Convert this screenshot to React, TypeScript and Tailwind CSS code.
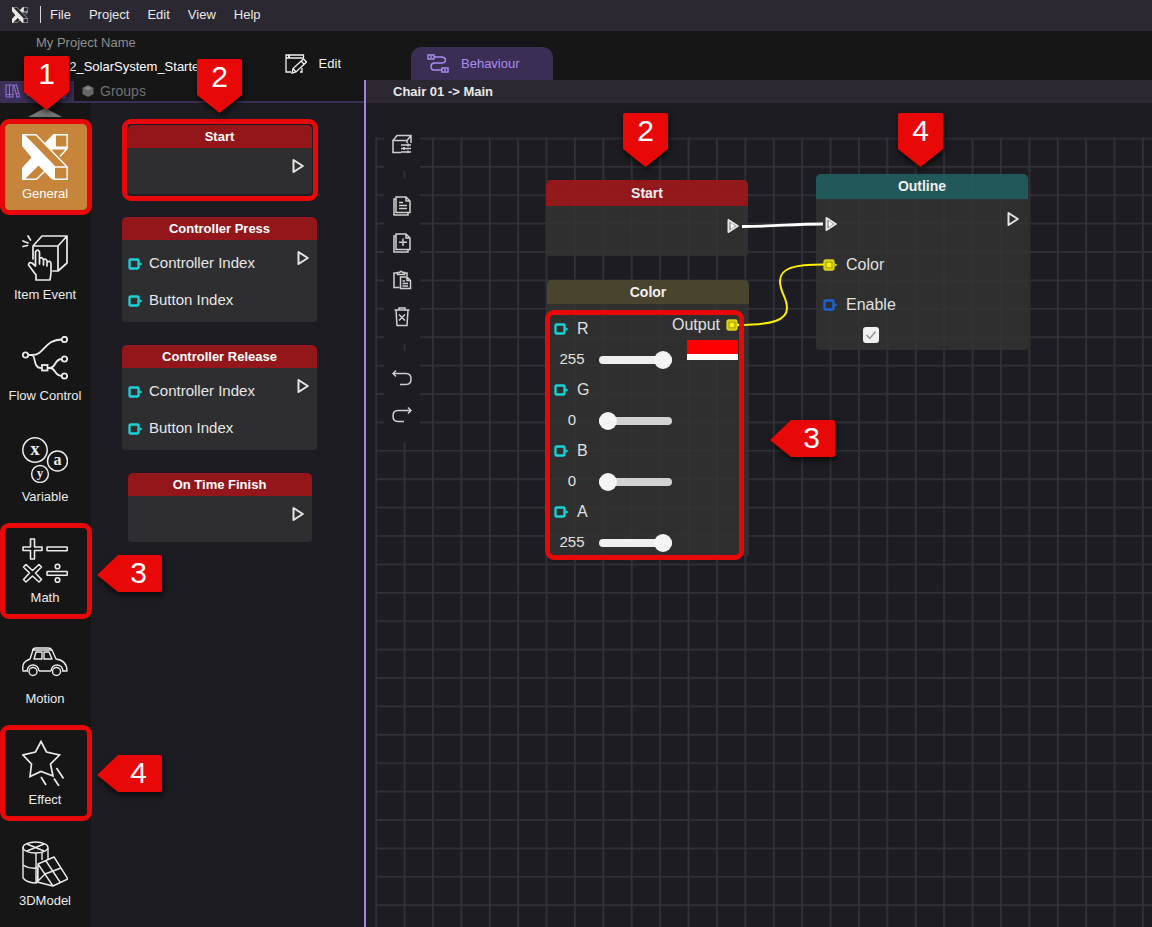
import React from "react";

type IconProps = { className?: string };

const BrandMark = ({ className }: IconProps) => (
  <svg viewBox="0 0 46 46" className={className} fill="none" stroke="currentColor" strokeWidth="1.500" strokeLinejoin="miter">
    <path d="M0 0 L3 1 L33 32 V46 L29.500 45 L16.500 31.500 L3 45 L0 46 V34 L9.500 23.500 L0 12 Z" fill="currentColor" stroke="none" />
    <path d="M0 .8 H14 L45.200 33 V45.200 H32" />
    <path d="M33 33 H45" />
    <path d="M22.500 9 L31.500 0 H34 V13.500 L29.500 16 Z" fill="currentColor" stroke="none" />
    <path d="M32 .8 H45.200 V13.300 H33 M45.200 13 V14.500 L38 22.500 M30 14.800 H44" />
    <path d="M1 45.200 H14.500 L23 37" />
  </svg>
);

const ItemEventIcon = ({ className }: IconProps) => (
  <svg viewBox="0 0 46 46" className={className} fill="none" stroke="currentColor" strokeWidth="1.7" strokeLinejoin="round" strokeLinecap="round">
    <path d="M11 24 V11 H36 V36 H31 M11 11 L20 1 H45 L36 11 M45 1 V28 L36 36" />
    <path d="M1 6 L6 8 M6 1 L8.500 5 M1 11.500 L5.500 10.500" />
    <path d="M14 45 V40 L6.500 30 Q7 26.500 10 28 L13.500 31 V17 Q15.500 13 17.500 17 V29 V24 Q20 21 21.500 25 V30 V25 Q24 23 25 26 V31 V27 Q29 25 29 29 V38 L28 45 Z" />
  </svg>
);

const FlowIcon = ({ className }: IconProps) => (
  <svg viewBox="0 0 46 46" className={className} fill="none" stroke="currentColor" strokeWidth="1.8">
    <circle cx="3.500" cy="19" r="2.700" />
    <circle cx="42.500" cy="3.500" r="2.700" />
    <circle cx="42.500" cy="23" r="2.700" />
    <circle cx="42.500" cy="40" r="2.700" />
    <rect x="20" y="29" width="5.500" height="5.500" />
    <path d="M6 19 H10 C23 19 22 3.500 40 3.500 M10 19 C14 20 11 32 19 32 M26 32 H28 C34 32 32 23 40 23 M28 32 C34 32 32 40 40 40" />
  </svg>
);

const VariableIcon = ({ className }: IconProps) => (
  <svg viewBox="0 0 46 46" className={className} fill="none" stroke="currentColor" strokeWidth="1.500">
    <circle cx="13" cy="13" r="12.200" />
    <circle cx="35.500" cy="24" r="10" />
    <circle cx="18" cy="37" r="8.400" />
    <g fill="currentColor" stroke="none" textAnchor="middle" className="font-['Liberation_Serif',serif] font-bold">
      <text x="13" y="18" fontSize="19">x</text>
      <text x="35.500" y="28" fontSize="16">a</text>
      <text x="18" y="40" fontSize="13">y</text>
    </g>
  </svg>
);

const MathIcon = ({ className }: IconProps) => (
  <svg viewBox="0 0 46 46" className={className} fill="none" stroke="currentColor" strokeWidth="1.600" strokeLinejoin="round">
    <path d="M8.500 1 H12.500 V9 H20 V12.500 H12.500 V21 H8.500 V12.500 H1 V9 H8.500 Z" />
    <rect x="25" y="9" width="20.300" height="3.800" rx=".6" />
    <path d="M4 26.500 L10.500 32.500 L17 26.500 L19.500 29 L13.500 35 L19.500 41.500 L17 44 L10.500 38 L4 44 L1.500 41.500 L7.500 35 L1.500 29 Z" />
    <rect x="25" y="33.500" width="20.300" height="3.800" rx=".6" />
    <circle cx="35.500" cy="28.500" r="2.300" />
    <circle cx="35.500" cy="42" r="2.300" />
  </svg>
);

const MotionIcon = ({ className }: IconProps) => (
  <svg viewBox="0 0 46 46" className={className} fill="none" stroke="currentColor" strokeWidth="1.4" strokeLinejoin="round">
    <path d="M6 32 H1 C0 25 2 22 8 20 L11 11 Q11 9 14 9 H26 Q29 9 30 11 L34 20 C42 21 45 25 45 32 H40 M17 32 H29" />
    <path d="M10 11 H30 M12 20 L14 13 H20 V20 Z M22 13 H27 L30 20 H22 Z" />
    <path d="M5 32 Q6 26 11 26 Q16 26 17 32 M29 32 Q30 26 35 26 Q40 26 41 32" />
    <circle cx="11" cy="32.500" r="4" />
    <circle cx="34.500" cy="32.500" r="4" />
  </svg>
);

const EffectIcon = ({ className }: IconProps) => (
  <svg viewBox="0 0 46 46" className={className} fill="none" stroke="currentColor" strokeWidth="1.7">
    <path d="M19 1.500 L24.500 12 L37.500 15 L28.500 24 L31 36 L19 31.500 L8 36.500 L9.500 24 L1 15 L13.500 12 Z" />
    <path d="M19 37 L24 45 M32 38.500 L37 46 M34.500 28 L41.500 38.500" />
  </svg>
);

const ModelIcon = ({ className }: IconProps) => (
  <svg viewBox="0 0 46 46" className={className} fill="none" stroke="currentColor" strokeWidth="1.4" strokeLinejoin="round">
    <ellipse cx="13.500" cy="6.500" rx="12.500" ry="5.500" />
    <path d="M1 6 V37 Q5 42 15 42 M26 7 V18 M1 24 Q7 28 15 27 M14 12 V42 M20 11 V19 M5 3 L22 10 M22 3 L5 10" />
    <path d="M16 23 L32 16 L46 38 L31 45 L15 41 Z M16 23 L31 45 M24 20 L38 41 M15 41 L23 33 L39 27 M16 23 V41" />
  </svg>
);

const categories = [
  { name: "General", Icon: BrandMark, marked: true, active: true },
  { name: "Item Event", Icon: ItemEventIcon },
  { name: "Flow Control", Icon: FlowIcon },
  { name: "Variable", Icon: VariableIcon },
  { name: "Math", Icon: MathIcon, marked: true },
  { name: "Motion", Icon: MotionIcon },
  { name: "Effect", Icon: EffectIcon, marked: true },
  { name: "3DModel", Icon: ModelIcon },
];

const FlowPort = ({ linked = false }: { linked?: boolean }) => (
  <svg viewBox="0 0 12 16" className="h-4 w-3 shrink-0" fill={linked ? "#777" : "none"} stroke="#e4e4e4" strokeWidth="2" strokeLinejoin="round">
    <path d="M1.500 2 L10.800 8 L1.500 14 Z" />
    {linked && <path d="M4 5.500 L7.500 8 L4 10.500 Z" fill="#fff" stroke="#fff" strokeWidth=".8" />}
  </svg>
);

const DataPort = ({ className, linked = false }: { className: string; linked?: boolean }) => (
  <svg viewBox="0 0 15 12" className={`h-3 w-[15px] shrink-0 ${className}`} fill="none" stroke="currentColor">
    <rect x="1.500" y="1.500" width="9" height="9" rx="1" strokeWidth="2.300" fill={linked ? "#8d8a12" : "none"} />
    {linked && <rect x="3.500" y="3.500" width="5" height="5" fill="#fff200" stroke="none" />}
    <path d="M11.500 4 L14.500 6 L11.500 8 Z" fill="currentColor" stroke="none" />
  </svg>
);

function LibraryNode({ title, inputs = [] }: { title: string; inputs?: string[] }) {
  const wide = inputs.length > 0;
  return (
    <article className={`overflow-hidden rounded-t-[5px] rounded-b-[3px] bg-[#2e2e30] ${wide ? "w-[195px]" : "w-[184px]"}`}>
      <h3 className="bg-[#93171a] text-center text-[13px] leading-[23px] font-bold text-white">{title}</h3>
      <div className={`flex justify-between ${wide ? "h-[82px] pr-2 pl-[6px]" : "h-[46px] pr-2"}`}>
        <ul className="pt-[5px]">
          {inputs.map((name) => (
            <li key={name} className="flex h-[37px] items-center gap-[6px] text-[15px] text-[#e6e6e6]">
              <DataPort className="text-[#19d3d6]" />
              {name}
            </li>
          ))}
        </ul>
        <div className="pt-[10px]">
          <FlowPort />
        </div>
      </div>
    </article>
  );
}

function Channel({ name, value }: { name: string; value: number }) {
  return (
    <div>
      <label htmlFor={`channel-${name}`} className="flex h-[30px] items-center gap-2 text-base text-[#e0e0e0]">
        <DataPort className="text-[#19d3d6]" />
        {name}
      </label>
      <div className="flex h-[31px] items-center gap-[9px]">
        <output className="w-9 text-center text-[15px] text-[#e0e0e0]">{value}</output>
        <input
          id={`channel-${name}`}
          type="range"
          min={0}
          max={255}
          defaultValue={value}
          className={`h-2 w-[73px] appearance-none rounded-full [&::-webkit-slider-thumb]:size-[18px] [&::-webkit-slider-thumb]:appearance-none [&::-webkit-slider-thumb]:rounded-full [&::-webkit-slider-thumb]:bg-[#f4f4f4] ${
            value > 0 ? "bg-[#efefef]" : "bg-[#d2d2d2]"
          }`}
        />
      </div>
    </div>
  );
}

function DownCallout({ n, className }: { n: number; className: string }) {
  return (
    <div className={`pointer-events-none absolute z-20 h-[54px] w-[45px] ${className}`}>
      <svg viewBox="0 0 45 54" className="absolute inset-0 size-full overflow-visible drop-shadow-[1px_3px_3px_rgba(0,0,0,0.7)]" fill="#e90808">
        <path d="M2 0 H43 Q45 0 45 2 V36 L22.500 54 L0 36 V2 Q0 0 2 0 Z" />
      </svg>
      <span className="relative block text-center text-[30px] leading-9 text-white">{n}</span>
    </div>
  );
}

function LeftCallout({ n, className }: { n: number; className: string }) {
  return (
    <div className={`pointer-events-none absolute z-20 h-[37px] w-[65px] ${className}`}>
      <svg viewBox="0 0 65 37" className="absolute inset-0 size-full overflow-visible drop-shadow-[1px_3px_3px_rgba(0,0,0,0.7)]" fill="#e90808">
        <path d="M21 0 H63 Q65 0 65 2 V35 Q65 37 63 37 H21 L0 20 Z" />
      </svg>
      <span className="relative block pl-[18px] text-center text-[30px] leading-9 text-white">{n}</span>
    </div>
  );
}

const ToolButton = ({ label, children }: { label: string; children: React.ReactNode }) => (
  <button aria-label={label} className="flex h-[37px] w-full items-center justify-center text-[#cfcfcf]">
    <svg viewBox="0 0 20 20" className="size-5" fill="none" stroke="currentColor" strokeWidth="1.500">
      {children}
    </svg>
  </button>
);

function Toolbar() {
  return (
    <div className="absolute top-[22px] left-[18px] flex w-9 flex-col gap-[7px]">
      <div className="rounded bg-[#1d1c22] pb-[9px]">
        <ToolButton label="Object properties">
          <path d="M9 18.500 H1 V6.500 H15 V9 M1 6.500 L5 1.500 H19 V9 M19 1.500 L15 6.500" />
          <path d="M9 11 H19 M9 14.500 H19 M9 18 H19 M16 9.500 V12.500 M12 13 V16 M16 16.500 V19" />
        </ToolButton>
      </div>
      <div className="rounded bg-[#1d1c22] pt-[9px] pb-[9px]">
        <ToolButton label="Copy">
          <path d="M4 1 H14 L18 5 V16.500 H4 Z M14 1 V5 H18 M4 3 H2 V19 H16 V17 M7 6.500 H11 M7 9.500 H15 M7 12.500 H15" />
        </ToolButton>
        <ToolButton label="Duplicate">
          <path d="M4 1 H14 L18 5 V16.500 H4 Z M14 1 V5 H18 M4 3 H2 V19 H16 V17 M11 5.500 V13 M7 9.300 H15" />
        </ToolButton>
        <ToolButton label="Paste">
          <path d="M7.500 17.500 H2 V3 H6 M12 3 H15 V6 M5.500 4.500 V2.500 H7.500 Q9 0 10.500 2.500 H12.500 V4.500 Z" />
          <path d="M8.500 7 H15 L18.500 10.500 V18.500 H8.500 Z M15 7 V10.500 H18.500 M10.500 11 H13 M10.500 13.500 H16 M10.500 16 H16" />
        </ToolButton>
        <ToolButton label="Delete">
          <path d="M2.500 3 H17.500 M7 3 V1 H13 V3 M4 3 L5 18.500 H15 L16 3 M7 7.500 L13 13.500 M13 7.500 L7 13.500" />
        </ToolButton>
      </div>
      <div className="rounded bg-[#1d1c22] pt-[9px] pb-2">
        <ToolButton label="Undo">
          <path d="M4 1.500 L1 4.500 L4 7.500 M1 4.500 H14 Q19 4.500 19 10 Q19 15.500 14 15.500 H8" />
        </ToolButton>
        <ToolButton label="Redo">
          <path d="M16 1.500 L19 4.500 L16 7.500 M19 4.500 H6 Q1 4.500 1 10 Q1 15.500 6 15.500 H12" />
        </ToolButton>
      </div>
    </div>
  );
}

function Canvas() {
  return (
    <section className="relative flex-1 overflow-hidden bg-[#1d1c22]">
      <svg className="absolute inset-0 size-full">
        <defs>
          <pattern id="grid" x="9.200" y="34.500" width="28.400" height="28.400" patternUnits="userSpaceOnUse">
            <path d="M0 .9 H28.400 M.9 0 V28.400" stroke="#323235" strokeWidth="1.800" />
          </pattern>
        </defs>
        <rect x="9.200" y="34.500" width="100%" height="100%" fill="url(#grid)" />
      </svg>
      <Toolbar />

      <article className="absolute top-[77px] left-[180px] w-[202px] overflow-hidden rounded-t-[5px] rounded-b-[3px]">
        <h3 className="bg-[#9a181b]/95 text-center text-sm leading-[26px] font-bold text-[#f0f0f0]">Start</h3>
        <div className="flex h-[50px] justify-end bg-[#323233]/85 pt-3 pr-[9px]">
          <FlowPort linked />
        </div>
      </article>

      <article className="absolute top-[177px] left-[181px] w-[202px] overflow-hidden rounded-t-[5px] rounded-b-[3px]">
        <h3 className="bg-[#4b472e]/95 text-center text-sm leading-6 font-bold text-[#f0f0f0]">Color</h3>
        <div className="flex h-[252px] justify-between bg-[#323233]/85 pt-[10px] pr-3 pl-[7px]">
          <div>
            <Channel name="R" value={255} />
            <Channel name="G" value={0} />
            <Channel name="B" value={0} />
            <Channel name="A" value={255} />
          </div>
          <div className="flex flex-col items-end">
            <div className="-mr-[3px] flex items-center gap-[6px] text-base leading-[22px] text-[#e0e0e0]">
              Output
              <DataPort linked className="text-[#d9d21a]" />
            </div>
            <div className="mt-1 w-[51px] border-b-[6px] border-white bg-[#fe0000] pt-[14px]" />
          </div>
        </div>
      </article>

      <article className="absolute top-[71px] left-[450px] w-[212px] overflow-hidden rounded-t-[5px] rounded-b-[3px]">
        <h3 className="bg-[#225c5e]/95 text-center text-sm leading-[25px] font-bold text-[#f0f0f0]">Outline</h3>
        <div className="h-[151px] bg-[#323233]/85 px-[7px]">
          <div className="flex h-[46px] items-start justify-between">
            <div className="pt-[17px] pl-[2px]">
              <FlowPort linked />
            </div>
            <div className="pt-3 pr-[2px]">
              <FlowPort />
            </div>
          </div>
          <div className="flex h-10 items-center gap-2 text-base text-[#e0e0e0]">
            <DataPort linked className="text-[#d9d21a]" />
            Color
          </div>
          <label htmlFor="enable" className="flex h-10 items-center gap-2 text-base text-[#e0e0e0]">
            <DataPort className="text-[#1b66d6]" />
            Enable
          </label>
          <div className="ml-10 grid w-4 grid-cols-1 grid-rows-1 pt-[2px]">
            <input id="enable" type="checkbox" defaultChecked className="peer col-start-1 row-start-1 size-4 appearance-none rounded-[3px] bg-[#f1f1f1]" />
            <svg viewBox="0 0 16 16" className="pointer-events-none invisible col-start-1 row-start-1 size-4 peer-checked:visible" fill="none" stroke="#8b8b8b" strokeWidth="1.300">
              <path d="M3.500 8 L6.800 11.500 L12.500 4.500" />
            </svg>
          </div>
        </div>
      </article>

      <svg className="pointer-events-none absolute inset-0 size-full" fill="none" strokeWidth="2">
        <path d="M376 123.500 C410 123.500 425 121 457 121" stroke="#fff" strokeWidth="2.800" />
        <path d="M371 222 C407 222 421 217 421 205 C421 194 414 190 414 178 C414 165 428 161.500 458 161.500" stroke="#fdf000" />
      </svg>

      <div className="pointer-events-none absolute top-[207px] left-[179px] h-[250px] w-[199px] rounded-[9px] border-[5px] border-[#e90808]" />

      <DownCallout n={2} className="top-[10px] left-[257px]" />
      <DownCallout n={4} className="top-[10px] left-[532px]" />
      <LeftCallout n={3} className="top-[317px] left-[404px]" />
    </section>
  );
}

export default function App() {
  return (
    <div className="relative flex h-screen flex-col overflow-hidden bg-[#161616] font-['Liberation_Sans',Arial,sans-serif] text-[13px] text-[#e8e8e8]">
      <nav className="flex h-[31px] shrink-0 items-center bg-[#2b2832] pb-[2px] pl-3">
        <BrandMark className="size-4" />
        <span className="mr-[9px] ml-3 h-[17px] w-px bg-[#d8d8d8]" />
        <div className="flex gap-[18px]">
          {["File", "Project", "Edit", "View", "Help"].map((item) => (
            <button key={item}>{item}</button>
          ))}
        </div>
      </nav>

      <div className="flex min-h-0 flex-1">
        <aside className="flex w-[364px] shrink-0 flex-col">
          <header className="flex h-[50px] shrink-0 items-center justify-between pr-[23px] pl-9">
            <div className="pb-[2px]">
              <p className="leading-6 text-[#8f8f8f]">My Project Name</p>
              <p className="pl-[26px] leading-6 text-white">02_SolarSystem_Starter</p>
            </div>
            <button className="flex items-center gap-3 pt-4 text-[#f2f2f2]">
              <svg viewBox="0 0 22 20" className="h-5 w-[22px]" fill="none" stroke="currentColor" strokeWidth="1.300">
                <path d="M18.500 4 V1 H1 V18 H6 M1 4 H18 M3 2.500 H5 M15 18 H17 V14" />
                <path d="M7 19 L8 14.500 L18.500 5 L21.500 8 L11 18 Z M8 14.500 L11 18 M16 7 L19.500 10.500" />
              </svg>
              Edit
            </button>
          </header>

          <div className="flex h-[22px] shrink-0 border-b-2 border-[#3b2e57] text-sm leading-5">
            <button className="flex w-[74px] items-center gap-[6px] bg-[#3b2e57] pl-[5px] text-[#8d6fd0]">
              <svg viewBox="0 0 15 14" className="h-[14px] w-[15px] shrink-0" fill="none" stroke="currentColor" strokeWidth="1.100">
                <path d="M1 1 H4.500 V13 H1 Z M4.500 1 H8 V13 H4.500 Z M9 1.500 L11.500 .8 L14.500 12.500 L12 13.300 Z M1 10.500 H8 M11 10 L14 9" />
              </svg>
              Library
            </button>
            <button className="flex items-center gap-[6px] pl-2 text-[#707070]">
              <svg viewBox="0 0 12 12" className="size-3" fill="#666">
                <path d="M6 0 L11.500 2.800 V9 L6 12 L.5 9 V2.800 Z" />
                <path d="M2 3.300 L6 1.500 L10 3.300 L6 5.300 Z" fill="#8a8a8a" />
              </svg>
              Groups
            </button>
          </div>

          <div className="flex min-h-0 flex-1">
            <div className="w-[91px] shrink-0 pl-[5px]">
              <svg viewBox="0 0 34 9" className="mt-[5px] ml-[23px] h-[9px] w-[34px]" fill="#777">
                <path d="M0 9 L17 0 L34 9 Z" />
              </svg>
              <div className="mt-[7px] flex flex-col gap-[15px]">
                {categories.map(({ name, Icon, active, marked }) => (
                  <button
                    key={name}
                    className={`relative flex h-[86px] w-[82px] shrink-0 flex-col items-center gap-1 rounded-[4px] pt-[10px] pr-[2px] whitespace-nowrap ${
                      active ? "bg-[#c6853b] text-white" : "text-[#ebebeb]"
                    }`}
                  >
                    <Icon className="size-[46px]" />
                    <span className="leading-5">{name}</span>
                    {marked && <span className="pointer-events-none absolute -inset-[5px] z-10 rounded-[9px] border-[5px] border-[#e90808]" />}
                  </button>
                ))}
              </div>
            </div>

            <div className="flex-1 bg-[#1d1c22]">
              <div className="flex w-[257px] flex-col items-center gap-[23px] pt-[22px]">
                <div className="relative">
                  <LibraryNode title="Start" />
                  <span className="pointer-events-none absolute -inset-x-[6px] -top-[6px] -bottom-[7px] rounded-[9px] border-[5px] border-[#e90808]" />
                </div>
                <LibraryNode title="Controller Press" inputs={["Controller Index", "Button Index"]} />
                <LibraryNode title="Controller Release" inputs={["Controller Index", "Button Index"]} />
                <LibraryNode title="On Time Finish" />
              </div>
            </div>
          </div>
        </aside>

        <main className="flex min-w-0 flex-1 flex-col">
          <header className="flex h-[49px] shrink-0 items-end pl-[47px]">
            <button className="flex h-[33px] w-[142px] items-center gap-3 rounded-t-[10px] bg-[#3a2e54] pl-4 text-[#ab8df0]">
              <svg viewBox="0 0 22 19" className="h-[19px] w-[22px]" fill="none" stroke="currentColor" strokeWidth="1.400">
                <path d="M1 1 H7 V5 H1 Z M15 14 H21 V18 H15 Z M4 2 V4 M18 15 V17" />
                <path d="M7 3 H15 Q18.500 3.500 18.500 6 Q18.500 9 15 9 H7 Q4 9.500 4 12.500 Q4 16 7 16 H15" />
              </svg>
              Behaviour
            </button>
          </header>
          <div className="flex min-h-0 flex-1 flex-col border-l-2 border-[#9f84e0]">
            <h2 className="bg-[#2b2832] pl-[27px] leading-[23px] font-bold">Chair 01 -&gt; Main</h2>
            <Canvas />
          </div>
        </main>
      </div>

      <DownCallout n={1} className="top-14 left-6" />
      <DownCallout n={2} className="top-[59px] left-[197px]" />
      <LeftCallout n={3} className="top-[555px] left-[97px]" />
      <LeftCallout n={4} className="top-[755px] left-[97px]" />
    </div>
  );
}
